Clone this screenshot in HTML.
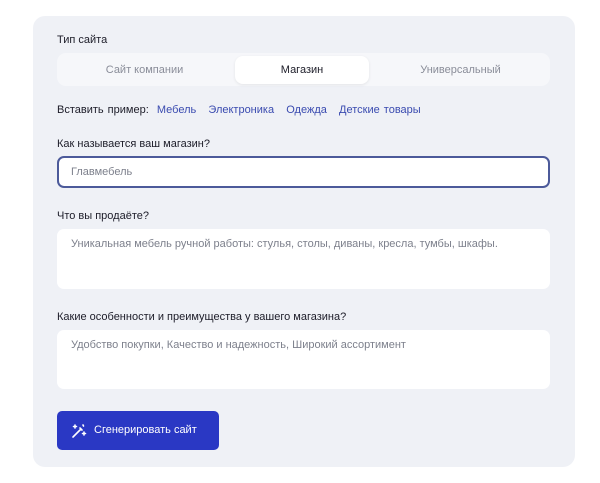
<!DOCTYPE html><html><head><meta charset="utf-8"><style>
body{margin:0;width:600px;height:483px;background:#fff;font-family:"Liberation Sans",sans-serif;position:relative;overflow:hidden}
.card{position:absolute;left:33px;top:16px;width:542px;height:451px;background:#eff1f6;border-radius:12px}
.a{position:absolute;font-size:11px;color:#1c1c28;white-space:nowrap}
.tabs{position:absolute;left:57px;top:53px;width:493px;height:33px;background:#f6f7fa;border-radius:9px}
.tab{position:absolute;top:3px;height:28px;line-height:28px;text-align:center;font-size:11px;color:#8a8d99}
.act{background:#fff;border-radius:8px;color:#1c1c28;box-shadow:0 1px 3px rgba(0,0,0,.08)}
.box{position:absolute;left:57px;width:493px;background:#fff;border-radius:7px;font-size:11px;color:#7d808c;box-sizing:border-box;padding-left:14px}
.l{color:#3a4bb0}
</style></head><body>
<div class="card"></div>
<div class="a" style="left:57px;top:34px">Тип сайта</div>
<div class="tabs">
<div class="tab" style="left:0;width:175px">Сайт компании</div>
<div class="tab act" style="left:178px;width:134px">Магазин</div>
<div class="tab" style="left:316px;width:175px">Универсальный</div>
</div>
<div class="a" style="left:57px;top:104px;word-spacing:1px">Вставить пример: <span class="l">&nbsp;Мебель &nbsp; Электроника &nbsp; Одежда &nbsp; Детские товары</span></div>
<div class="a" style="left:57px;top:138px">Как называется ваш магазин?</div>
<div class="box" style="top:156px;height:32px;border:2px solid #4c5a9a;line-height:28px;padding-left:12px">Главмебель</div>
<div class="a" style="left:57px;top:210px">Что вы продаёте?</div>
<div class="box" style="top:229px;height:60px;padding-top:9px">Уникальная мебель ручной работы: стулья, столы, диваны, кресла, тумбы, шкафы.</div>
<div class="a" style="left:57px;top:311px">Какие особенности и преимущества у вашего магазина?</div>
<div class="box" style="top:330px;height:59px;padding-top:9px">Удобство покупки, Качество и надежность, Широкий ассортимент</div>
<div style="position:absolute;left:57px;top:411px;width:162px;height:39px;background:#2a38c4;border-radius:5px;color:#fff;font-size:11px;line-height:39px">
<svg style="position:absolute;left:14px;top:12px" width="16" height="16" viewBox="0 0 16 16" fill="none" stroke="#fff" stroke-width="1.6" stroke-linecap="round"><path d="M2 14L10 6M9 5l2 2M4 2v3M2.5 3.5h3M13 9v3M11.5 10.5h3M12 2l.5 1"/></svg>
<span style="position:absolute;left:37px">Сгенерировать сайт</span></div>
</body></html>
